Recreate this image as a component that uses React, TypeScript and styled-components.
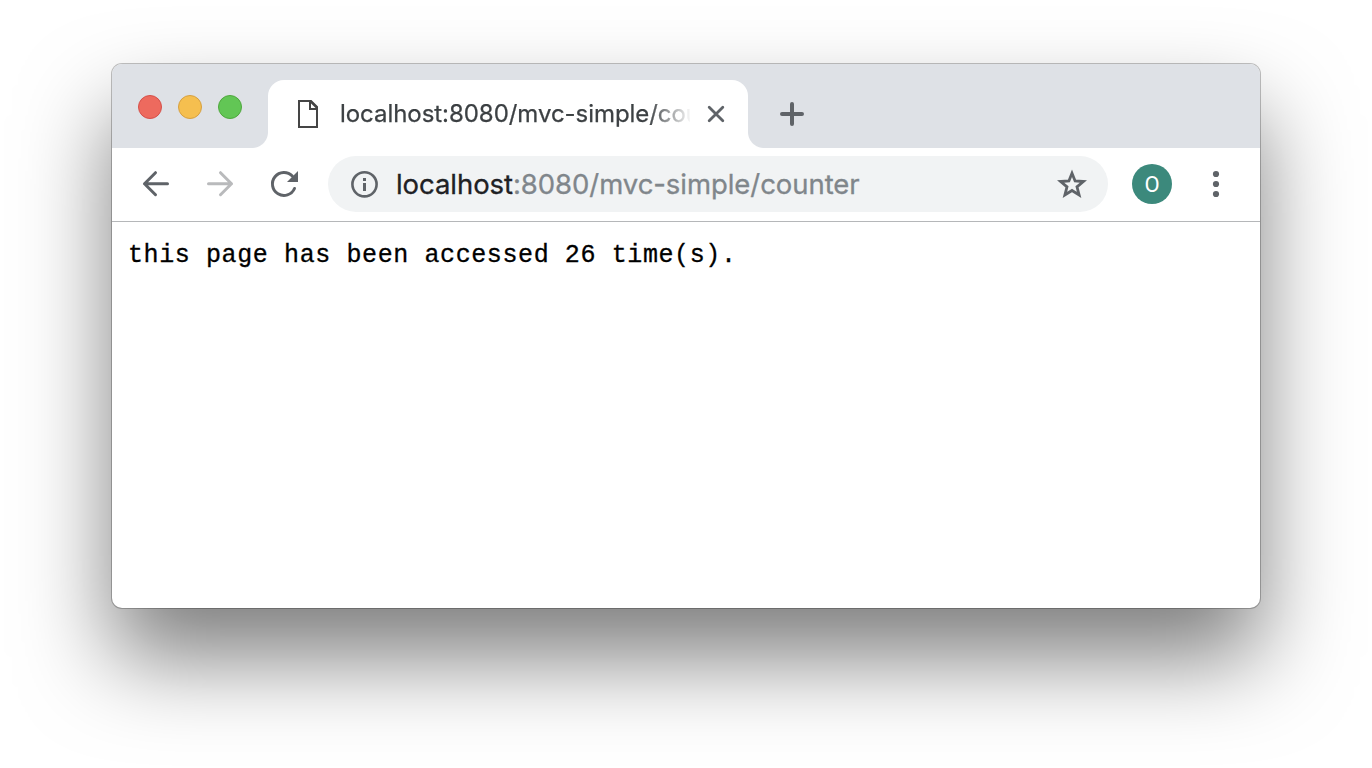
import React from "react";
import styled, { createGlobalStyle } from "styled-components";

const GlobalStyle = createGlobalStyle`
  *, *::before, *::after { box-sizing: border-box; }
  body { margin: 0; background: #fff; overflow: hidden; font-family: Inter, Roboto, sans-serif; }
`;

const Desktop = styled.div`
  height: 768px;
  padding: 64px 112px 160px;
  overflow: hidden;
`;

const BrowserWindow = styled.main`
  display: flex;
  flex-direction: column;
  width: 1148px;
  height: 544px;
  border-radius: 10px;
  background: #fff;
  box-shadow: 0 0 0 1px rgba(0, 0, 0, 0.24), 0 50px 90px rgba(0, 0, 0, 0.51);
`;

const TabStrip = styled.header`
  display: flex;
  align-items: flex-end;
  height: 84px;
  background: #dee1e6;
  border-radius: 10px 10px 0 0;
`;

const WindowControls = styled.div`
  display: flex;
  align-self: flex-start;
  gap: 16px;
  width: 156px;
  padding: 31px 0 0 26px;
`;

const ControlDot = styled.span<{ $fill: string; $edge: string }>`
  width: 24px;
  height: 24px;
  border-radius: 50%;
  background: ${(p) => p.$fill};
  border: 1px solid ${(p) => p.$edge};
`;

const Tab = styled.div`
  position: relative;
  display: flex;
  align-items: center;
  width: 480px;
  height: 68px;
  padding: 0 20px 0 28px;
  border-radius: 16px 16px 0 0;
  background: #fff;

  &::before,
  &::after {
    content: "";
    position: absolute;
    bottom: 0;
    width: 16px;
    height: 16px;
  }
  &::before {
    right: 100%;
    background: radial-gradient(circle at 0 0, transparent 15.5px, #fff 16.5px);
  }
  &::after {
    left: 100%;
    background: radial-gradient(circle at 100% 0, transparent 15.5px, #fff 16.5px);
  }
`;

const TabTitle = styled.span`
  flex: none;
  width: 350px;
  margin-left: 20px;
  overflow: hidden;
  white-space: nowrap;
  font-size: 24px;
  line-height: 34px;
  letter-spacing: -0.05px;
  color: #3c4043;
  -webkit-text-stroke: 0.25px currentColor;
  mask-image: linear-gradient(to right, #000 308px, transparent 352px);
`;

const CloseIcon = styled.svg`
  margin-left: 16px;
`;

const NewTabIcon = styled.svg`
  align-self: center;
  margin: 16px 0 0 30px;
`;

const Toolbar = styled.nav`
  display: flex;
  align-items: center;
  height: 74px;
  padding: 0 28px 2px;
  border-bottom: 1px solid #b5b7b9;
`;

const NavIcons = styled.div`
  display: flex;
  gap: 32px;
  width: 188px;
`;

const AddressBar = styled.div`
  display: flex;
  align-items: center;
  width: 780px;
  height: 56px;
  padding: 0 20px;
  border-radius: 28px;
  background: #f1f3f4;
`;

const Address = styled.span`
  flex: 1;
  margin-left: 16px;
  padding-top: 1px;
  font-size: 27.5px;
  line-height: 40px;
  letter-spacing: -0.06px;
  color: #80868b;
  -webkit-text-stroke: 0.3px currentColor;
  white-space: nowrap;
`;

const Host = styled.span`
  color: #202124;
`;

const Avatar = styled.span`
  display: flex;
  align-items: center;
  justify-content: center;
  width: 40px;
  height: 40px;
  padding-top: 1px;
  margin: 0 28px 0 24px;
  border-radius: 50%;
  background: #3c897c;
  color: #fff;
  font: 22px Roboto, sans-serif;
`;

const PageText = styled.pre`
  margin: 0;
  padding: 19px 16px;
  font: 25px/30px "Liberation Mono", monospace;
  letter-spacing: 0.6px;
  color: #000;
  -webkit-text-stroke: 0.3px #000;
`;

export default function App() {
  return (
    <>
      <GlobalStyle />
      <Desktop>
        <BrowserWindow>
          <TabStrip>
            <WindowControls>
              <ControlDot $fill="#ed6a5e" $edge="#d5504a" />
              <ControlDot $fill="#f5bf4f" $edge="#d6a041" />
              <ControlDot $fill="#62c655" $edge="#4fa73e" />
            </WindowControls>
            <Tab>
              <svg width="24" height="32" viewBox="0 0 24 32" fill="none" stroke="#454545" strokeWidth="2">
                <path d="M3 3h12l6 6v20H3z" />
                <path d="M14 3v8h7" />
                <path d="M14 3l7 7" />
              </svg>
              <TabTitle>localhost:8080/mvc-simple/counter</TabTitle>
              <CloseIcon width="20" height="20" viewBox="0 0 20 20" stroke="#5f6368" strokeWidth="2.8" strokeLinecap="round">
                <path d="M3.2 3.2l13.6 13.6M16.8 3.2L3.2 16.8" />
              </CloseIcon>
            </Tab>
            <NewTabIcon width="28" height="28" viewBox="0 0 28 28" stroke="#5f6368" strokeWidth="4" strokeLinecap="round">
              <path d="M14 4v20M4 14h20" />
            </NewTabIcon>
          </TabStrip>
          <Toolbar>
            <NavIcons>
              <svg width="32" height="32" viewBox="0 0 32 32" fill="none" stroke="#5f6368" strokeWidth="3" strokeLinecap="round" strokeLinejoin="round">
                <path d="M15.5 4.7L4.5 15.7l11 11M4.5 15.7h23" />
              </svg>
              <svg width="32" height="32" viewBox="0 0 32 32" fill="none" stroke="#b9babc" strokeWidth="3" strokeLinecap="round" strokeLinejoin="round">
                <path d="M16.5 4.7l11 11-11 11M27.5 15.7h-23" />
              </svg>
              <svg width="32" height="32" viewBox="0 0 32 32" fill="none">
                <path d="M26.5 20.5A11.5 11.5 0 1 1 24.3 8" stroke="#5f6368" strokeWidth="3" strokeLinecap="round" />
                <path d="M30 3v11H19z" fill="#5f6368" />
              </svg>
            </NavIcons>
            <AddressBar>
              <svg width="32" height="32" viewBox="0 0 32 32" fill="none">
                <circle cx="16.5" cy="16.3" r="12.1" stroke="#5f6368" strokeWidth="2.6" />
                <path d="M15 10h3v3h-3zM15 15h3v8h-3z" fill="#5f6368" />
              </svg>
              <Address>
                <Host>localhost</Host>:8080/mvc-simple/counter
              </Address>
              <svg width="32" height="32" viewBox="0 0 32 32" fill="none">
                <path d="M16 5.2l3.1 7.7 8.3.6-6.4 5.3 2.1 8.2-7.1-4.5-7.1 4.5 2.1-8.2-6.4-5.3 8.3-.6z" stroke="#5f6368" strokeWidth="2.8" />
              </svg>
            </AddressBar>
            <Avatar>O</Avatar>
            <svg width="32" height="32" viewBox="-4 0 32 32" fill="#5f6368">
              <circle cx="12" cy="6" r="3.1" />
              <circle cx="12" cy="16" r="3.1" />
              <circle cx="12" cy="26" r="3.1" />
            </svg>
          </Toolbar>
          <PageText>this page has been accessed 26 time(s).</PageText>
        </BrowserWindow>
      </Desktop>
    </>
  );
}
